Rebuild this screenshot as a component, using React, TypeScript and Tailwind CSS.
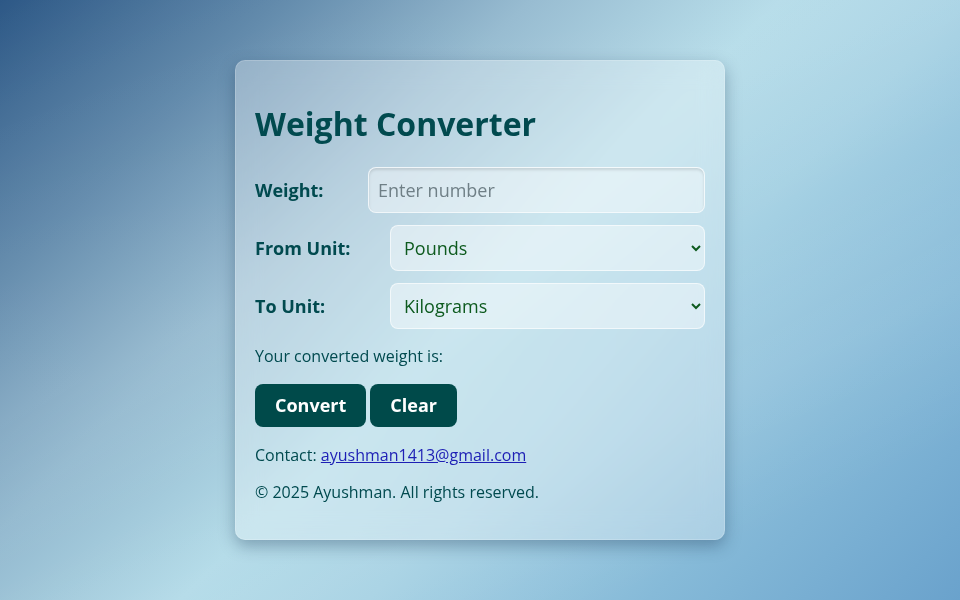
import React from "react";

export default function App() {
  return (
    <div
      className="relative w-[960px] h-[600px] overflow-hidden flex justify-center items-start pt-[60px]"
      style={{
        fontFamily: '"Open Sans", "Noto Sans", sans-serif',
        background:
          "linear-gradient(135deg, #2d5886 0%, #5f88aa 18%, #93b9cf 34%, #b3dbe8 50%, #a7d2e4 62%, #86bad8 80%, #6aa2cc 100%)",
      }}
    >
      <div className="pointer-events-none absolute inset-0 bg-[linear-gradient(155deg,transparent_0%,rgba(255,255,255,0.08)_40%,transparent_55%,rgba(255,255,255,0.06)_70%,transparent_85%)]" />
      <div className="relative w-[490px] h-[480px] rounded-[10px] pt-5 px-[19px] bg-[rgba(255,255,255,0.3)] border border-[rgba(255,255,255,0.18)] shadow-[0_6px_16px_rgba(20,50,80,0.35)] backdrop-blur-md text-[#014a4f]">
        <h1 className="text-[32px] font-bold leading-[1.362] my-[21.4px] text-[#014a4f]">
          Weight Converter
        </h1>
        <div className="flex items-center mb-3">
          <label className="w-[113px] shrink-0 text-[18px] font-bold">Weight:</label>
          <input
            type="text"
            placeholder="Enter number"
            className="flex-1 h-[46px] text-[18px] px-[9px] rounded-[8px] border border-[rgba(255,255,255,0.6)] bg-[rgba(255,255,255,0.42)] shadow-[inset_0_2px_3px_rgba(0,0,0,0.12)] placeholder:text-[#6f7f86] outline-none"
          />
        </div>
        <div className="flex items-center mb-3">
          <label className="w-[135px] shrink-0 text-[18px] font-bold">From Unit:</label>
          <select
            defaultValue="pounds"
            className="flex-1 h-[46px] text-[18px] pl-[9px] pr-[9px] rounded-[8px] border border-[rgba(255,255,255,0.6)] bg-[rgba(255,255,255,0.42)] text-[#0d5a1e] outline-none"
          >
            <option value="pounds">Pounds</option>
            <option value="kilograms">Kilograms</option>
          </select>
        </div>
        <div className="flex items-center">
          <label className="w-[135px] shrink-0 text-[18px] font-bold">To Unit:</label>
          <select
            defaultValue="kilograms"
            className="flex-1 h-[46px] text-[18px] pl-[9px] pr-[9px] rounded-[8px] border border-[rgba(255,255,255,0.6)] bg-[rgba(255,255,255,0.42)] text-[#0d5a1e] outline-none"
          >
            <option value="pounds">Pounds</option>
            <option value="kilograms">Kilograms</option>
          </select>
        </div>
        <p className="text-[16px] leading-[1.362] mt-[17px] mb-4">Your converted weight is:</p>
        <div className="flex gap-1">
          <button className="h-[43px] px-5 rounded-[8px] bg-[#004a4a] text-white text-[18px] font-bold">
            Convert
          </button>
          <button className="h-[43px] px-5 rounded-[8px] bg-[#004a4a] text-white text-[18px] font-bold">
            Clear
          </button>
        </div>
        <p className="text-[16px] leading-[1.362] mt-[17.5px] mb-4">
          Contact:{" "}
          <a href="#" className="text-[#1d1fb5] underline">
            ayushman1413@gmail.com
          </a>
        </p>
        <p className="text-[16px] leading-[1.362] mt-4">© 2025 Ayushman. All rights reserved.</p>
      </div>
    </div>
  );
}
